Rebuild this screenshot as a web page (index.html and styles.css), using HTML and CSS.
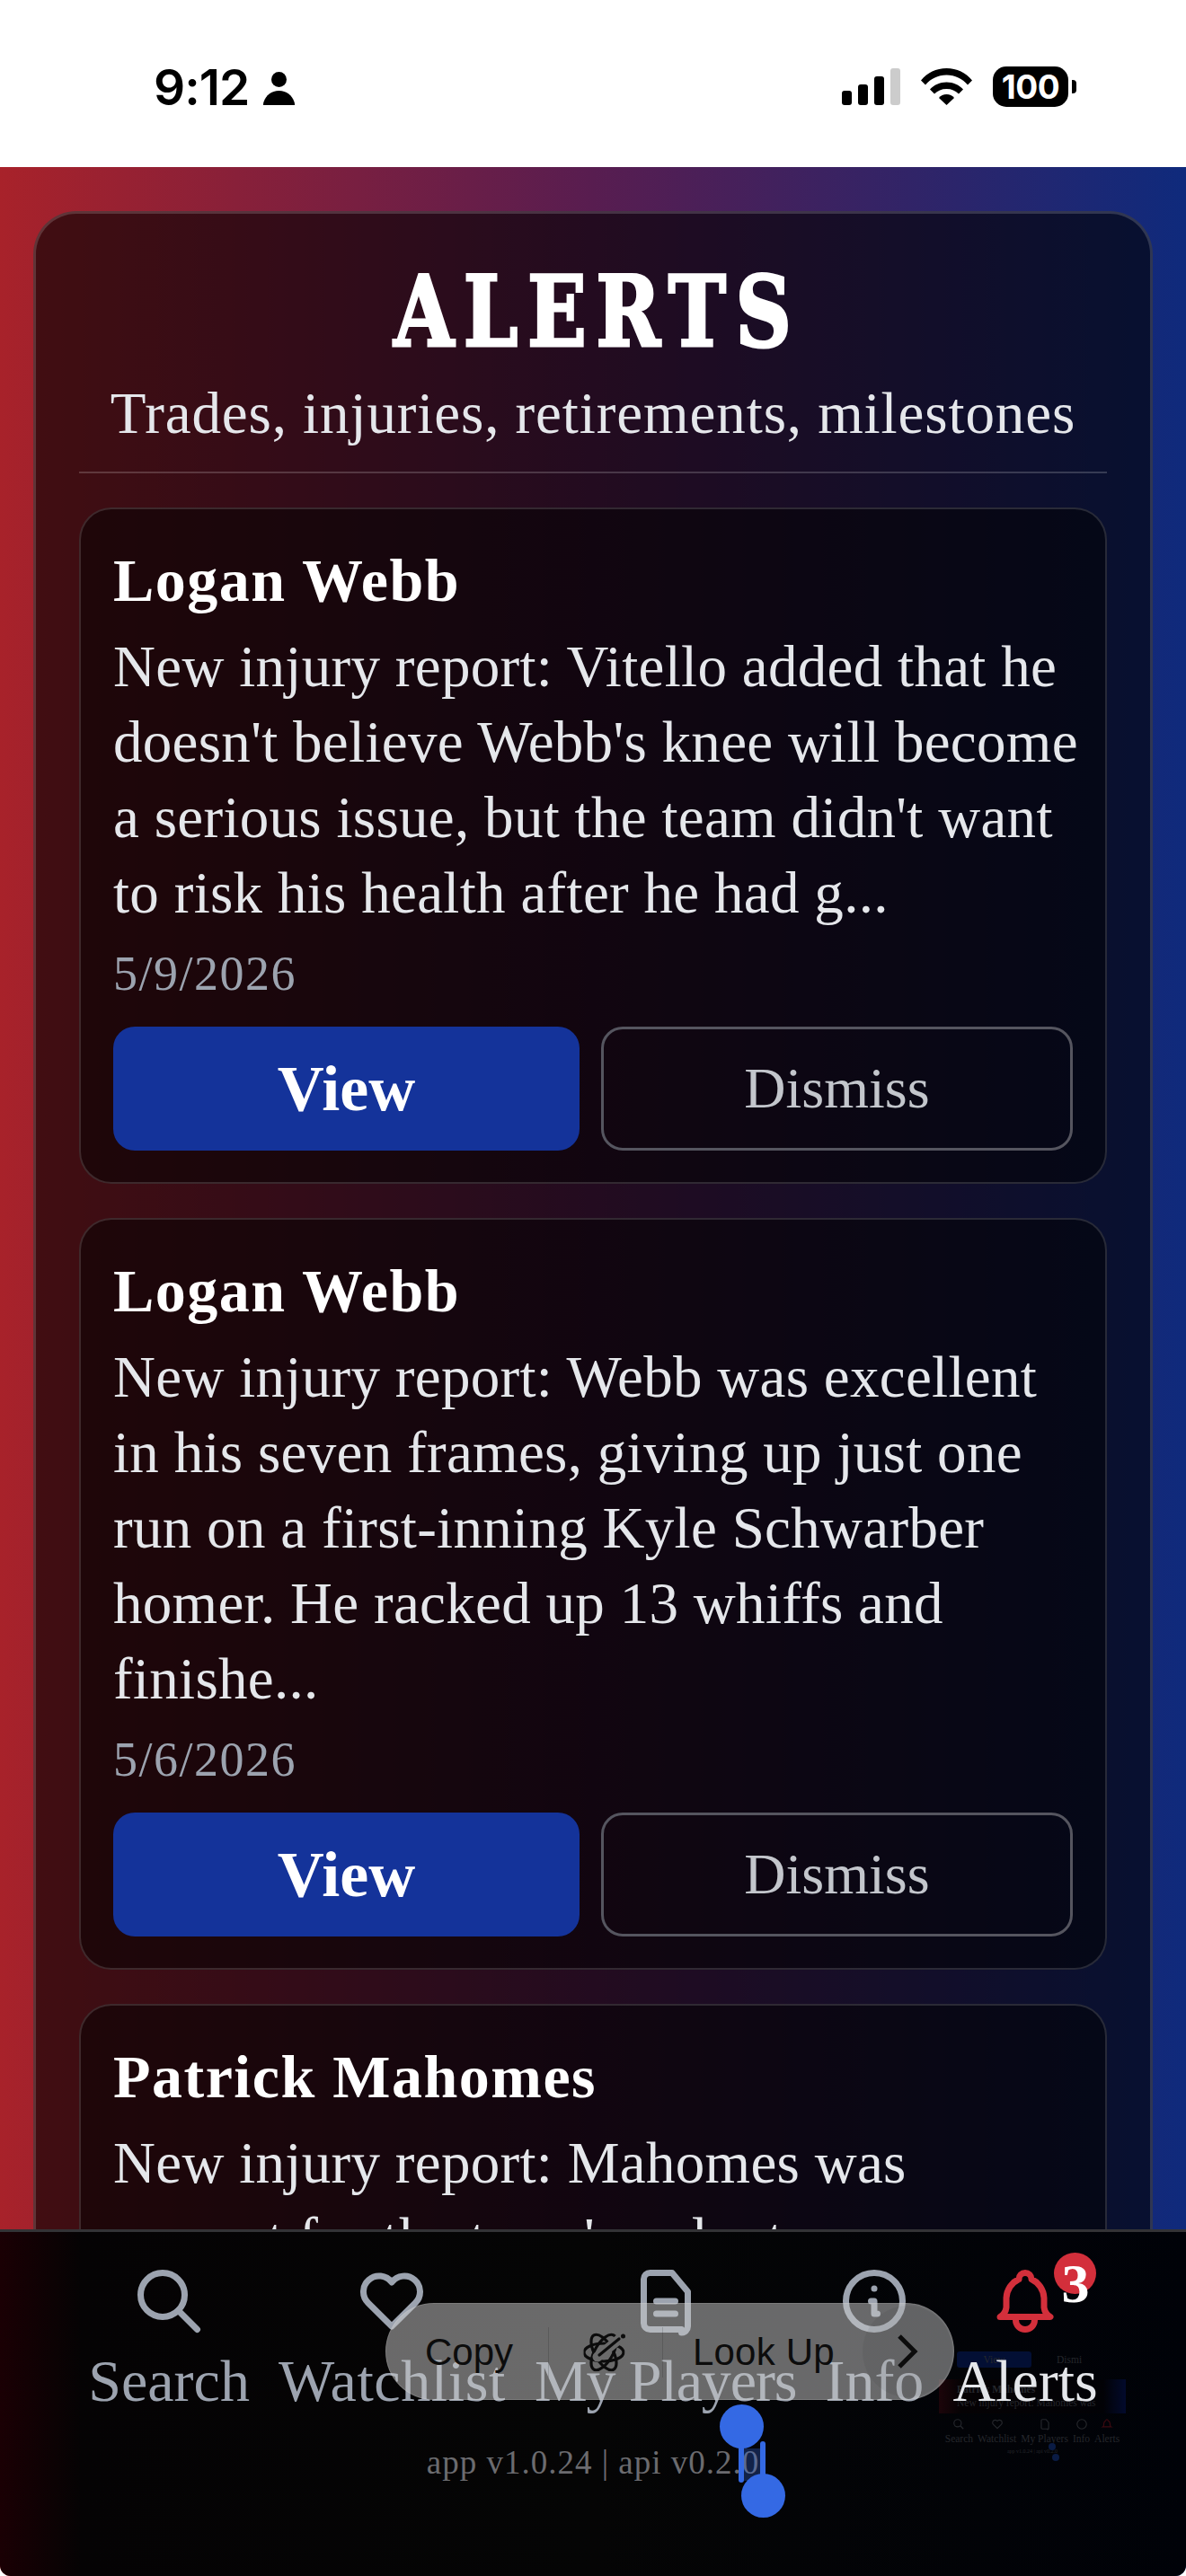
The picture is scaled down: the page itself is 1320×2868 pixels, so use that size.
FILE: index.html
```html
<!DOCTYPE html>
<html lang="en">
<head>
<meta charset="utf-8">
<title>Alerts</title>
<link rel="stylesheet" href="styles.css">
</head>
<body>
<div class="screen">
  <header class="status">
    <div class="status-left">
      <span class="clock">9:12</span>
      <svg class="person" viewBox="0 0 35 38"><circle cx="17.5" cy="9.5" r="8.5"/><path d="M0 38c0-1 0-2 .5-3.500C3 27 9 22 17.500 22S32 27 34.500 34.500c.5 1.500.5 2.500.5 3.500z"/></svg>
    </div>
    <div class="status-right">
      <div class="signal"><i class="b1"></i><i class="b2"></i><i class="b3"></i><i class="b4"></i></div>
      <svg class="wifi" viewBox="0 0 57 41"><path d="M0 13.500C7 5 17 0 28.500 0S50 5 57 13.500l-5 5C46 11.500 38 7.500 28.500 7.500S11 11.500 5 18.500z"/><path d="M10 23.500c4.500-5 11-8 18.500-8s14 3 18.500 8l-5 5c-3.500-3.500-8-5.500-13.500-5.500S18.500 25 15 28.500z"/><path d="M20 33c2-2.500 5-4 8.500-4s6.500 1.500 8.500 4l-8.500 8z"/></svg>
      <div class="battery"><span class="battery-level">100</span><i class="nub"></i></div>
    </div>
  </header>

  <main class="stage">
    <section class="panel">
      <h1 class="title"><span class="title-text">ALERTS</span></h1>
      <p class="subtitle">Trades, injuries, retirements, milestones</p>
      <hr class="rule">
      <article class="card">
        <h2 class="name">Logan Webb</h2>
        <p class="body">New injury report: Vitello added that he<br>doesn't believe Webb's knee will become<br>a serious issue, but the team didn't want<br>to risk his health after he had g...</p>
        <p class="date">5/9/2026</p>
        <div class="actions"><button class="btn view">View</button><button class="btn dismiss">Dismiss</button></div>
      </article>
      <article class="card">
        <h2 class="name">Logan Webb</h2>
        <p class="body">New injury report: Webb was excellent<br>in his seven frames, giving up just one<br>run on a first-inning Kyle Schwarber<br>homer. He racked up 13 whiffs and<br>finishe...</p>
        <p class="date">5/6/2026</p>
        <div class="actions"><button class="btn view">View</button><button class="btn dismiss">Dismiss</button></div>
      </article>
      <article class="card">
        <h2 class="name">Patrick Mahomes</h2>
        <p class="body">New injury report: Mahomes was<br>present for the team's voluntary<br>workouts this week.</p>
      </article>
    </section>
  </main>

  <nav class="tabbar">
    <div class="ghost">
      <div class="ghost-btns"><span class="ghost-view">View</span><span class="ghost-dismiss">Dismi</span></div>
      <div class="ghost-card"><b>Patrick Mahomes</b><span>New injury report: Mahomes was</span></div>
      <div class="ghost-tabs">
        <div class="ghost-tab"><svg viewBox="0 0 24 24"><circle cx="10" cy="10" r="7"/><path d="M21 21l-6-6"/></svg><span>Search</span></div>
        <div class="ghost-tab"><svg viewBox="0 0 24 24"><path d="M19.500 12.572l-7.500 7.428l-7.500-7.428a5 5 0 1 1 7.500-6.566a5 5 0 1 1 7.500 6.572"/></svg><span>Watchlist</span></div>
        <div class="ghost-tab"><svg viewBox="0 0 24 24"><path d="M17 21h-10a2 2 0 0 1-2-2v-14a2 2 0 0 1 2-2h7l5 6v11a2 2 0 0 1-2 2z"/></svg><span>My Players</span></div>
        <div class="ghost-tab"><svg viewBox="0 0 24 24"><circle cx="12" cy="12" r="9"/></svg><span>Info</span></div>
        <div class="ghost-tab ghost-on"><svg viewBox="0 0 24 24"><path d="M10 5a2 2 0 1 1 4 0a7 7 0 0 1 4 6v3a4 4 0 0 0 2 3h-16a4 4 0 0 0 2-3v-3a7 7 0 0 1 4-6"/></svg><span>Alerts</span></div>
      </div>
      <p class="ghost-version">app v1.0.24 | api v0.2.0</p>
      <i class="ghost-dot ghost-dot-a"></i><i class="ghost-dot ghost-dot-b"></i>
    </div>
    <div class="tabs">
      <div class="tab"><svg class="ico" viewBox="0 0 24 24"><circle cx="10" cy="10" r="7"/><path d="M21 21l-6-6"/></svg><span class="tab-label">Search</span></div>
      <div class="tab"><svg class="ico" viewBox="0 0 24 24"><path d="M19.500 12.572l-7.500 7.428l-7.500-7.428a5 5 0 1 1 7.500-6.566a5 5 0 1 1 7.500 6.572"/></svg><span class="tab-label label-wide">Watchlist</span></div>
      <div class="tab"><svg class="ico" viewBox="0 0 24 24"><path d="M17 21h-10a2 2 0 0 1-2-2v-14a2 2 0 0 1 2-2h7l5 6v11a2 2 0 0 1-2 2z"/><path d="M9 12h6M9 16h6"/></svg><span class="tab-label label-tight">My Players</span></div>
      <div class="tab"><svg class="ico" viewBox="0 0 24 24"><circle cx="12" cy="12" r="9"/><path d="M12 8h.01M11 12h1v4h1"/></svg><span class="tab-label">Info</span></div>
      <div class="tab tab-active"><svg class="ico" viewBox="0 0 24 24"><path d="M10 5a2 2 0 1 1 4 0a7 7 0 0 1 4 6v3a4 4 0 0 0 2 3h-16a4 4 0 0 0 2-3v-3a7 7 0 0 1 4-6"/><path d="M9 17v1a3 3 0 0 0 6 0v-1"/></svg><span class="tab-label">Alerts</span><span class="badge">3</span></div>
    </div>
    <p class="version">app v1.0.24 | api v0.2.0</p>
  </nav>

  <div class="selection"></div>
  <i class="handle-line line-a"></i><i class="handle-dot dot-a"></i>
  <i class="handle-line line-b"></i><i class="handle-dot dot-b"></i>

  <div class="menu">
    <span class="menu-item copy">Copy</span>
    <i class="menu-sep"></i>
    <span class="menu-item tools"><svg viewBox="0 0 49 48">
      <defs><mask id="pen-gap"><rect width="49" height="48" fill="#fff"/><path d="M17 30L44 8" stroke="#000" stroke-width="11"/></mask></defs>
      <g mask="url(#pen-gap)"><ellipse cx="24" cy="25" rx="22" ry="10"/><ellipse cx="24" cy="25" rx="22" ry="10" transform="rotate(60 24 25)"/><ellipse cx="24" cy="25" rx="22" ry="10" transform="rotate(120 24 25)"/></g>
      <path d="M19 28L41 10"/><circle class="tools-dot" cx="45.500" cy="7" r="2.500"/>
    </svg></span>
    <i class="menu-sep"></i>
    <span class="menu-item lookup">Look Up</span>
    <span class="menu-more"><svg viewBox="0 0 24 40"><path d="M3 3l17 17L3 37"/></svg></span>
  </div>
</div>
</body>
</html>
```
FILE: styles.css
```css
* { box-sizing: border-box; }
html, body { margin: 0; padding: 0; background: #fff; }
.screen {
  position: relative;
  width: 1320px;
  height: 2868px;
  overflow: hidden;
  display: flex;
  flex-direction: column;
  font-family: "Liberation Serif", serif;
  border-radius: 0 0 12px 12px;
}

/* status bar */
.status {
  flex: 0 0 186px;
  background: #fff;
  display: flex;
  justify-content: space-between;
  align-items: flex-start;
  padding: 74px 131px 0 171px;
}
.status-left { display: flex; align-items: flex-start; gap: 16px; }
.clock {
  font: 600 55px/46px Inter, sans-serif;
  color: #000;
  letter-spacing: -1px;
}
.person { width: 35px; height: 38px; margin-top: 5px; fill: #000; }
.status-right { display: flex; align-items: flex-start; }
.signal { display: flex; align-items: flex-end; gap: 7px; height: 43px; margin-right: 23px; }
.signal i { display: block; width: 11px; background: #000; border-radius: 3px; }
.signal .b1 { height: 16px; }
.signal .b2 { height: 23px; }
.signal .b3 { height: 32px; }
.signal .b4 { height: 41px; background: #ccc; }
.wifi { width: 57px; height: 41px; margin: 2px 23px 0 0; fill: #000; }
.battery {
  position: relative;
  width: 84px;
  height: 45px;
  background: #000;
  border-radius: 15px;
  display: flex;
  align-items: center;
  justify-content: center;
}
.battery-level { font: 700 37px/45px Inter, sans-serif; color: #fff; letter-spacing: -.5px; }
.nub {
  position: absolute;
  left: 88px;
  top: 15px;
  width: 5px;
  height: 15px;
  background: #000;
  border-radius: 0 4px 4px 0;
}

/* stage */
.stage {
  flex: 1;
  min-height: 0;
  background: linear-gradient(90deg, #a8222a 0%, #581d50 50%, #0f2a7c 100%);
  padding: 49px 37px 0;
}
.panel {
  height: 2700px;
  background: rgba(0, 0, 0, .6);
  border: 3px solid rgba(255, 255, 255, .16);
  border-radius: 48px;
  padding: 50px 48px 0;
}
.title {
  margin: 0;
  text-align: center;
  color: #fff;
  font-family: "DejaVu Serif", serif;
  font-size: 108px;
  line-height: 118px;
  font-weight: 700;
  height: 128px;
  white-space: nowrap;
}
.title-text {
  display: inline-block;
  padding-left: 13px;
  letter-spacing: 13px;
  transform: scaleX(.8);
  -webkit-text-stroke: 3px #fff;
}
.subtitle {
  margin: 2px 0 0;
  text-align: center;
  color: #e5e7eb;
  font-size: 65px;
  line-height: 84px;
  letter-spacing: .9px;
  white-space: nowrap;
}
.rule {
  border: 0;
  height: 2px;
  margin: 23px 0 38px;
  background: rgba(255, 255, 255, .18);
}
.card {
  border: 2px solid rgba(255, 255, 255, .14);
  border-radius: 36px;
  background: rgba(0, 0, 0, .5);
  padding: 36px 36px 35px;
  margin-bottom: 38px;
}
.name {
  margin: 0;
  color: #fff;
  font-size: 68px;
  line-height: 86px;
  font-weight: 700;
  letter-spacing: 1.500px;
}
.body {
  margin: 11px 0 0;
  color: #e5e7eb;
  font-size: 65px;
  line-height: 84px;
  letter-spacing: .3px;
  white-space: nowrap;
}
.date {
  margin: 15px 0 0;
  color: #9ca3af;
  font-size: 54px;
  line-height: 66px;
  letter-spacing: 1.500px;
}
.actions { display: flex; gap: 24px; margin-top: 26px; }
.btn {
  flex: 1;
  height: 138px;
  border-radius: 24px;
  font-family: inherit;
  font-size: 64px;
  padding: 0;
}
.view { background: #14339a; border: 0; color: #fff; font-size: 72px; font-weight: 700; flex: 0 0 519px; }
.dismiss { background: transparent; border: 3px solid #55555f; color: #c3c6cc; }

/* bottom bar */
.tabbar {
  position: absolute;
  left: 0;
  right: 0;
  top: 2482px;
  bottom: 0;
  background: linear-gradient(90deg, #1a0004 0, #050304 90px, #050505 50%, #000208 100%);
  border-top: 3px solid #333336;
}
.tabs {
  position: relative;
  display: flex;
  justify-content: center;
  gap: 32px;
  padding-top: 35px;
}
.tab {
  position: relative;
  display: flex;
  flex-direction: column;
  align-items: center;
  color: #9ca3af;
}
.ico {
  width: 84px;
  height: 84px;
  fill: none;
  stroke: currentColor;
  stroke-width: 2;
  stroke-linecap: round;
  stroke-linejoin: round;
}
.tab-label { font-size: 66px; line-height: 80px; margin-top: 7px; white-space: nowrap; }
.label-wide { letter-spacing: .6px; }
.label-tight { letter-spacing: -1.100px; }
.tab-active { color: #e5e7eb; }
.tab-active .ico { color: #d32f3b; }
.badge {
  position: absolute;
  left: 113px;
  top: -12px;
  width: 47px;
  height: 46px;
  border-radius: 50%;
  background: #d32f3b;
  color: #fff;
  font-size: 62px;
  line-height: 68px;
  font-weight: 700;
  text-align: center;
}
.version {
  position: relative;
  margin: 29px 0 0;
  text-align: center;
  color: #6b6b6f;
  font-size: 37px;
  line-height: 44px;
  letter-spacing: 1px;
}

/* faint app-switcher reflection behind the bar */
.ghost {
  position: absolute;
  left: 1045px;
  top: 133px;
  width: 208px;
  height: 150px;
  font-size: 11.500px;
  line-height: 14px;
  color: #25272c;
  white-space: nowrap;
}
.ghost-btns { display: flex; height: 18px; padding-left: 20px; line-height: 18px; }
.ghost-view { width: 83px; background: #030f34; text-align: center; border-radius: 3px; }
.ghost-dismiss { margin-left: 28px; }
.ghost-card {
  margin-top: 13px;
  height: 38px;
  padding: 4px 20px 0;
  background: linear-gradient(90deg, #1c050a, #050204 12%, #020206 88%, #020a2c);
  display: flex;
  flex-direction: column;
  gap: 1px;
}
.ghost-tabs {
  display: flex;
  justify-content: center;
  gap: 5px;
  margin-top: 5px;
  font-size: 11.500px;
}
.ghost-tab { display: flex; flex-direction: column; align-items: center; gap: 2px; }
.ghost-tab svg { width: 14px; height: 14px; fill: none; stroke: currentColor; stroke-width: 2; }
.ghost-on svg { color: #3c0a10; }
.ghost-version { margin: 3px 0 0; text-align: center; font-size: 6px; line-height: 8px; }
.ghost-dot { position: absolute; width: 8px; height: 8px; border-radius: 50%; background: #0a1b44; }
.ghost-dot-a { left: 122px; top: 102px; }
.ghost-dot-b { left: 126px; top: 114px; }

/* text selection overlay */
.selection { position: absolute; left: 825px; top: 2726px; width: 24px; height: 36px; background: rgba(52, 105, 228, .3); }
.handle-line { position: absolute; width: 6px; background: #3469e4; border-radius: 3px; }
.line-a { left: 822px; top: 2710px; height: 54px; }
.line-b { left: 846px; top: 2718px; height: 54px; }
.handle-dot { position: absolute; width: 49px; height: 49px; border-radius: 50%; background: #3469e4; }
.dot-a { left: 801px; top: 2677px; }
.dot-b { left: 825px; top: 2754px; }

/* iOS edit menu */
.menu {
  position: absolute;
  left: 429px;
  top: 2564px;
  width: 633px;
  height: 108px;
  border-radius: 54px;
  background: rgba(200, 200, 200, .52);
  border: 1px solid rgba(255, 255, 255, .12);
  color: #0c0c0c;
  font: 400 42px/108px "Liberation Sans", sans-serif;
}
.menu-item { position: absolute; top: 0; height: 106px; white-space: nowrap; }
.copy { left: 43px; }
.lookup { left: 341px; letter-spacing: .2px; }
.tools { left: 218px; top: 29px; width: 49px; height: 48px; }
.tools svg { display: block; width: 49px; height: 48px; fill: none; stroke: #0c0c0c; stroke-width: 3.200; stroke-linecap: round; }
.tools .tools-dot { fill: #0c0c0c; stroke: none; }
.menu-sep { position: absolute; top: 26px; height: 56px; width: 1px; background: rgba(0, 0, 0, .14); }
.menu-sep:nth-of-type(1) { left: 180px; }
.menu-sep:nth-of-type(2) { left: 307px; }
.menu-more {
  position: absolute;
  left: 530px;
  top: 2px;
  width: 100px;
  height: 102px;
  border-radius: 50%;
  background: rgba(0, 0, 0, .05);
  display: flex;
  align-items: center;
  justify-content: center;
}
.menu-more svg { width: 24px; height: 40px; fill: none; stroke: #0c0c0c; stroke-width: 5; }
```
